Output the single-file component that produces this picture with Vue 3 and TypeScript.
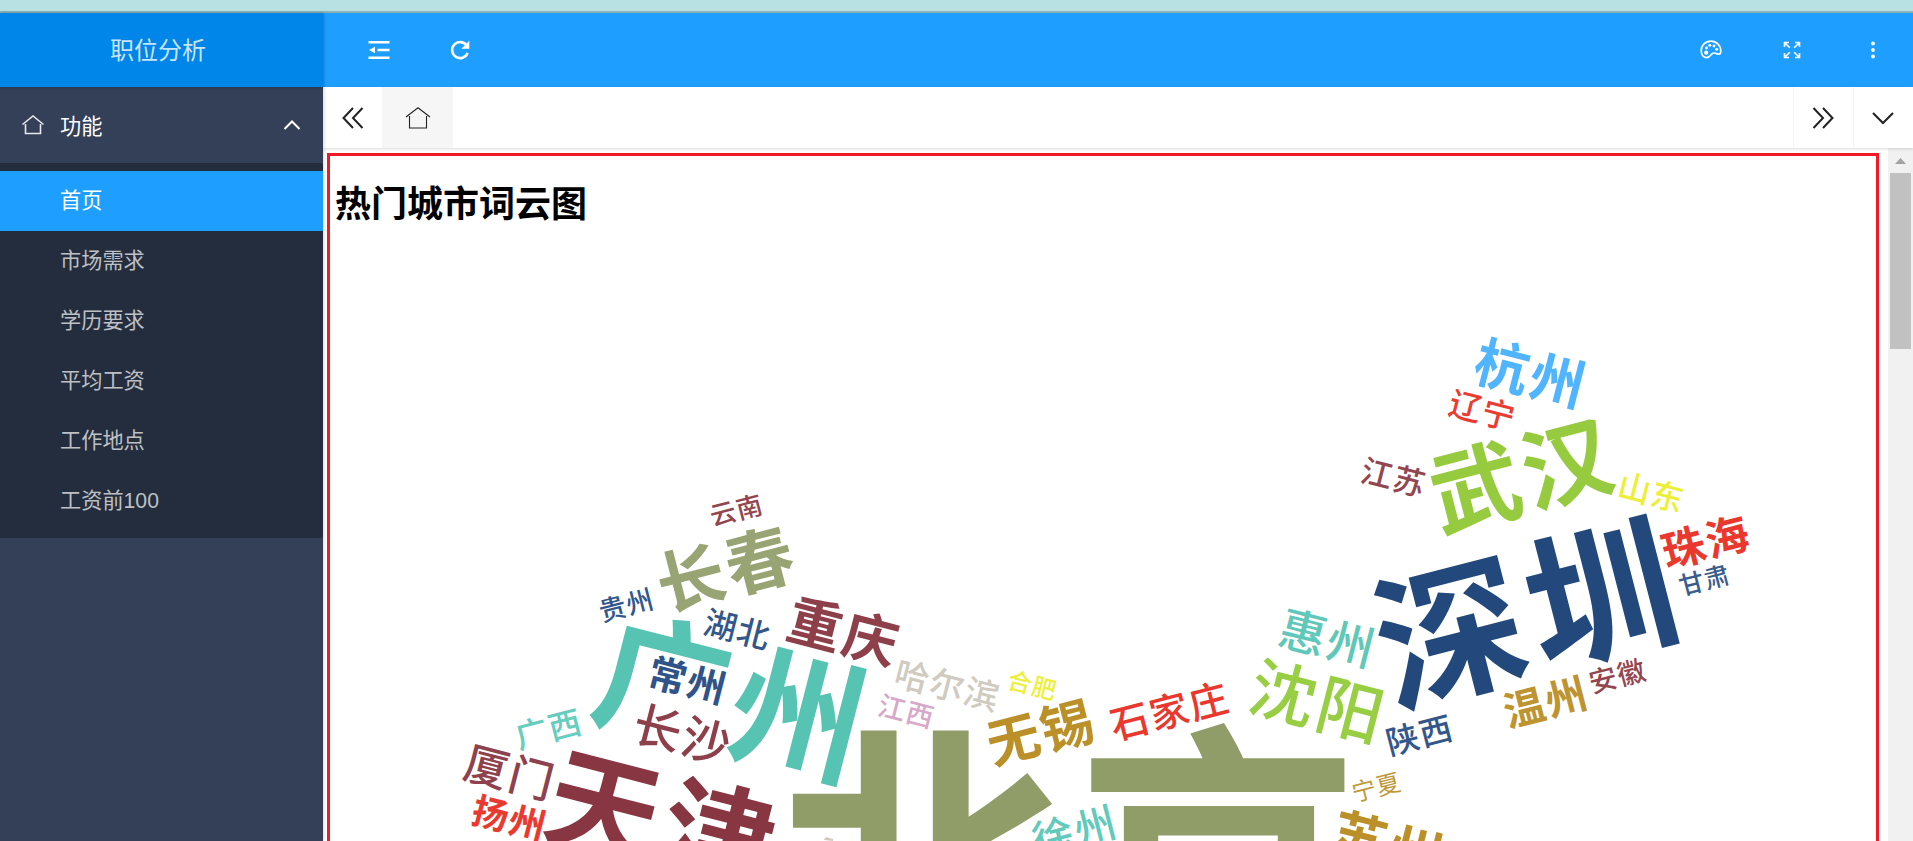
<script setup lang="ts">
interface CloudWord {
  text: string
  x: number
  y: number
  size: number
  dir: -1 | 0 | 1
  color: string
  weight: number
}

const TILT = 14.4

const menu: string[] = ['首页', '市场需求', '学历要求', '平均工资', '工作地点', '工资前100']

function word(text: string, x: number, y: number, size: number, dir: -1 | 0 | 1, color: string, weight = 500): CloudWord {
  return { text, x, y, size, dir, color, weight }
}

const words: CloudWord[] = [
  word('北京', 1069, 860, 298, 0, '#919d69', 700),
  word('深圳', 1525, 613, 155, -1, '#23497c', 700),
  word('广州', 731, 697, 139, 1, '#56c3b3', 700),
  word('天津', 661, 820, 117, 1, '#883642', 700),
  word('武汉', 1521, 475, 94, -1, '#96cb3f', 700),
  word('长春', 725, 569, 71, -1, '#98a473', 700),
  word('沈阳', 1317, 701, 69, 1, '#98ce43', 500),
  word('重庆', 843, 631, 57, 1, '#8d3f4a', 700),
  word('杭州', 1530, 373, 57, 1, '#50b4ff', 700),
  word('苏州', 1387, 845, 57, 1, '#bb9029', 700),
  word('无锡', 1040, 732, 55, -1, '#bb9029', 700),
  word('长沙', 682, 734, 50, 1, '#8d3f4a', 500),
  word('惠州', 1327, 638, 49, 1, '#5fc8b9', 500),
  word('厦门', 509, 772, 46, 1, '#8e424d', 500),
  word('珠海', 1705, 542, 45, -1, '#ea382e', 700),
  word('温州', 1545, 702, 43, -1, '#be9430', 700),
  word('徐州', 1074, 831, 43, -1, '#61cabb', 500),
  word('石家庄', 1169, 711, 40.5, -1, '#ea382e', 500),
  word('常州', 687, 680, 40, 1, '#305488', 700),
  word('扬州', 509, 818, 38, 1, '#ea3a30', 700),
  word('哈尔滨', 947, 685, 36, 1, '#d0cbc0', 500),
  word('湖北', 737, 629, 34, 1, '#33578a', 500),
  word('广西', 548, 729, 34, -1, '#66cdbf', 500),
  word('陕西', 1419, 735, 34, -1, '#33578a', 500),
  word('辽宁', 1482, 410, 34, 1, '#eb3c32', 500),
  word('山东', 1651, 492, 34, 1, '#ecef36', 500),
  word('江苏', 1393, 477, 33, 1, '#924650', 500),
  word('安徽', 1617, 676, 29, -1, '#924650', 500),
  word('贵州', 626, 605, 28, -1, '#33578a', 500),
  word('江西', 906, 711, 28.5, 1, '#d8a8ca', 500),
  word('云南', 736, 510, 27, -1, '#924650', 500),
  word('甘肃', 1704, 580, 26, -1, '#3a5d8e', 500),
  word('合肥', 1032, 685, 25, 1, '#edf03a', 500),
  word('宁夏', 1376, 787, 25, -1, '#c19838', 400)
]

// Share of each character cell that is taken by the glyph; the rest is tracking.
const FILL = 0.96

function place(w: CloudWord): string {
  return `translate(${w.x - 323} ${w.y - 148}) rotate(${w.dir * TILT})`
}
</script>

<template>
  <div class="page">
    <div class="strip"></div>
    <div class="shell">
      <aside class="side">
        <div class="logo">职位分析</div>
        <div class="group">
          <svg class="home" viewBox="0 0 24 22" width="24" height="22">
            <path d="M1.500 10.500 12 2l10.500 8.500M4.500 10v9.500h15V10" />
          </svg>
          <span>功能</span>
          <svg class="up" viewBox="0 0 18 12" width="18" height="12"><path d="M1.500 10 9 2.500l7.500 7.500" /></svg>
        </div>
        <nav class="sub">
          <a v-for="(m, i) in menu" :key="m" :class="{ active: i === 0 }">{{ m }}</a>
        </nav>
      </aside>
      <main class="main">
        <header class="top">
          <svg class="fold" viewBox="0 0 22 20" width="22" height="20">
            <path d="M.5 2.300h21M9.500 10h12M.5 17.700h21" /><path class="solid" d="M1 10l6-3.200v6.400z" />
          </svg>
          <svg class="reload" viewBox="0 0 20 20" width="20" height="20">
            <path d="M16.500 5.200A8 8 0 1 0 17.600 13" /><path class="solid" d="M19.300 .8v8h-8z" />
          </svg>
          <div class="spacer"></div>
          <svg class="palette" viewBox="0 0 22 19" width="22" height="19">
            <path d="M11 1.200C5.300 1.200 1.200 5.500 1.200 10.500c0 4.300 2.300 7.100 5.600 7.100 4.200 0 3.800-4.600 7.200-4.600 2.300 0 3 1.200 4.900 1.100 1.400-.1 1.900-1.300 1.900-3.200C20.800 5.500 16.500 1.200 11 1.200z" />
            <g class="solid"><circle cx="6.200" cy="12.700" r="2.100" /><circle cx="6.500" cy="8" r="1.400" /><circle cx="9.800" cy="5.300" r="1.500" /><circle cx="14" cy="6" r="1.400" /><circle cx="16.700" cy="9.300" r="1.400" /></g>
          </svg>
          <svg class="full" viewBox="0 0 18 18" width="18" height="18">
            <path d="M1.500 6V1.500H6M1.500 1.500l5.300 5.300M12 1.500h4.500V6M16.500 1.500l-5.300 5.300M1.500 12v4.500H6M1.500 16.500l5.300-5.300M16.500 12v4.500H12M16.500 16.500l-5.300-5.300" />
          </svg>
          <svg class="dots" viewBox="0 0 6 18" width="6" height="18">
            <circle cx="3" cy="2.500" r="1.900" /><circle cx="3" cy="9" r="1.900" /><circle cx="3" cy="15.500" r="1.900" />
          </svg>
        </header>
        <div class="tabs">
          <div class="arrow first">
            <svg viewBox="0 0 22 22" width="22" height="22"><path d="M11 1 1.500 11l9.500 10M20.500 1 11 11l9.500 10" /></svg>
          </div>
          <div class="tab">
            <svg viewBox="0 0 26 24" width="26" height="24"><path class="thin" d="M1 11 13 1.800 25 11M4.500 10v12h17V10" /></svg>
          </div>
          <div class="spacer"></div>
          <div class="arrow line">
            <svg viewBox="0 0 22 22" width="22" height="22"><path d="M1.500 1 11 11 1.500 21M11 1l9.500 10L11 21" /></svg>
          </div>
          <div class="arrow line">
            <svg viewBox="0 0 22 22" width="22" height="22"><path d="M1 6l10 10L21 6" /></svg>
          </div>
        </div>
        <section class="content">
          <div class="frame"><h1>热门城市词云图</h1></div>
          <div class="bar">
            <svg viewBox="0 0 25 25" width="25" height="25"><path d="M7 16l5.500-6 5.500 6z" /></svg>
            <div class="thumb"></div>
          </div>
          <svg class="cloud" viewBox="0 0 1565 693" width="1565" height="693">
            <text
              v-for="w in words"
              :key="w.text"
              :transform="place(w)"
              :x="w.size * (1 - FILL) * 0.5"
              :y="w.size * FILL * 0.38"
              :font-size="w.size * FILL"
              :letter-spacing="w.size * (1 - FILL)"
              :font-weight="w.weight"
              :fill="w.color"
            >{{ w.text }}</text>
            <path class="speck" d="M501 692l1-2 2-1 2 1 4 1v2z" />
          </svg>
        </section>
      </main>
    </div>
  </div>
</template>

<style>
html,
body {
  margin: 0;
  overflow: hidden;
}
</style>

<style scoped>
.page {
  width: 1913px;
  height: 841px;
  overflow: hidden;
  display: flex;
  flex-direction: column;
  background: #fff;
  font-family: "Liberation Sans", "Noto Sans CJK SC", sans-serif;
}
.strip {
  height: 11px;
  flex: none;
  background: #b8e1e4;
  border-bottom: 2px solid #8eb3b4;
}
.shell {
  flex: 1;
  min-height: 0;
  display: flex;
}
.side {
  width: 323px;
  flex: none;
  background: #344058;
  box-shadow: 1px 0 3px rgba(0, 0, 0, 0.16);
  position: relative;
  z-index: 2;
}
.logo {
  height: 74px;
  line-height: 75px;
  padding-right: 7px;
  text-align: center;
  background: #0085e8;
  color: rgba(255, 255, 255, 0.8);
  font-size: 24px;
  font-weight: 400;
  box-shadow: 0 1px 3px rgba(0, 0, 0, 0.2);
}
svg path {
  fill: none;
}
.group {
  height: 76px;
  display: flex;
  align-items: center;
  padding: 0 22px 0 21px;
  color: #fff;
  font-size: 21.2px;
}
.group span {
  margin: 0 0 2px 15px;
  flex: 1;
}
.home path {
  stroke: #e6e8ec;
  stroke-width: 1.6;
}
.up path {
  stroke: #fff;
  stroke-width: 2;
}
.sub {
  padding: 8px 0 7px;
  background: #242d3d;
  border-radius: 0 3px 3px 0;
}
.sub a {
  display: block;
  height: 60px;
  line-height: 60px;
  padding-left: 60px;
  font-size: 21.2px;
  color: #bdc0c5;
}
.sub a.active {
  background: #1e9fff;
  color: #fff;
}
.main {
  flex: 1;
  min-width: 0;
  display: flex;
  flex-direction: column;
}
.top {
  height: 74px;
  flex: none;
  display: flex;
  align-items: center;
  background: #1e9fff;
  padding: 0 37px 0 45px;
}
.top svg {
  margin-bottom: 1px;
}
.top path {
  stroke: #fff;
  stroke-width: 2.6;
}
.top .solid {
  fill: #fff;
  stroke: none;
}
.reload {
  margin-left: 60px;
}
.full {
  margin-left: 61px;
}
.top .full path {
  stroke-width: 1.6;
}
.top .palette path {
  stroke-width: 1.7;
}
.dots {
  margin-left: 69px;
  fill: #fff;
}
.spacer {
  flex: 1;
}
.tabs {
  height: 61px;
  flex: none;
  display: flex;
  background: #fff;
  box-shadow: 0 1px 3px rgba(0, 0, 0, 0.15);
  position: relative;
  z-index: 1;
}
.arrow,
.tab {
  display: flex;
  align-items: center;
  justify-content: center;
}
.tabs path {
  stroke: #222;
  stroke-width: 2;
}
.tabs .thin {
  stroke-width: 1.1;
}
.arrow {
  width: 59px;
}
.line {
  border-left: 1px solid #f4f4f4;
}
.line svg {
  margin-right: 1px;
}
.tab {
  width: 71px;
  background: #f6f6f6;
}
.content {
  flex: 1;
  min-height: 0;
  position: relative;
  display: flex;
  justify-content: space-between;
  overflow: hidden;
}
.frame {
  width: 1546px;
  height: 800px;
  margin: 5px 0 0 4px;
  border: 3px solid #f01b24;
}
h1 {
  margin: 22px 0 0 5px;
  font-size: 36px;
  line-height: 54px;
  font-weight: 700;
  color: #000;
}
.bar {
  width: 25px;
  background: #f1f1f1;
}
.bar svg {
  display: block;
}
.bar path {
  fill: #a3a3a3;
}
.thumb {
  width: 21px;
  height: 176px;
  margin: 0 auto;
  background: #c1c1c1;
}
.cloud {
  position: absolute;
  left: 0;
  top: 0;
}
.cloud text {
  font-family: "Noto Sans CJK SC", sans-serif;
  text-anchor: middle;
}
.cloud .speck {
  fill: #d0cbc0;
}
</style>
